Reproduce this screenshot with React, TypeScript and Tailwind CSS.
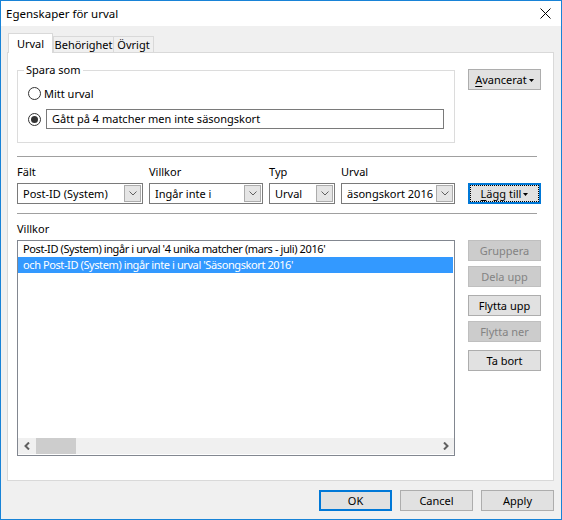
import React from 'react';

function Caret() {
  return (
    <svg width="5" height="3" viewBox="0 0 5 3" className="ml-[2px] mt-[2px]">
      <path d="M0 0h5L2.5 3z" fill="#000" />
    </svg>
  );
}

function Radio({ checked }: { checked?: boolean }) {
  return (
    <span className="w-[13px] h-[13px] rounded-full border border-[#333] bg-white flex items-center justify-center shrink-0">
      {checked && <span className="w-[7px] h-[7px] rounded-full bg-[#333]" />}
    </span>
  );
}

function Btn({ children, disabled }: { children: React.ReactNode; disabled?: boolean }) {
  return (
    <div
      className={
        disabled
          ? 'w-[73px] h-[21px] bg-[#cccccc] border border-[#bfbfbf] text-[#838383] flex items-center justify-center'
          : 'w-[73px] h-[21px] bg-[#e1e1e1] border border-[#adadad] text-black flex items-center justify-center'
      }
    >
      {children}
    </div>
  );
}

function Combo({ w, value }: { w: string; value: string }) {
  return (
    <div className={`${w} h-[21px] border border-[#7a7a7a] bg-white flex items-center pl-[5px] pr-[1px] py-[1px]`}>
      <span className="flex-1 overflow-hidden whitespace-nowrap">{value}</span>
      <span className="w-[17px] h-[17px] bg-[#e5e5e5] border border-[#acacac] flex items-center justify-center shrink-0">
        <svg width="8" height="5" viewBox="0 0 8 5">
          <path d="M0.5 0.5L4 4L7.5 0.5" stroke="#606060" fill="none" strokeWidth="1" />
        </svg>
      </span>
    </div>
  );
}

export default function App() {
  return (
    <div className="w-[562px] h-[520px] border border-[#1883d7] bg-[#f0f0f0] flex flex-col font-['Noto_Sans',sans-serif] text-[11px] leading-[16px] text-black">
      {/* title bar */}
      <div className="h-[25px] bg-white flex items-center justify-between pl-[5px] pr-[10px] shrink-0 text-[11.5px]">
        <span>Egenskaper för urval</span>
        <svg width="11" height="11" viewBox="0 0 11 11">
          <path d="M0.5 0.5L10.5 10.5M10.5 0.5L0.5 10.5" stroke="#000" strokeWidth="1" />
        </svg>
      </div>

      <div className="flex-1 flex flex-col pl-[6px] pr-[7px] pt-[7px]">
        {/* tabs */}
        <div className="flex items-end h-[20px] -mb-[1px] pl-[1px]">
          <div className="relative z-10 w-[45px] h-[20px] bg-white border border-b-0 border-[#d9d9d9] flex items-center justify-center">
            Urval
          </div>
          <div className="w-[61px] h-[17px] border border-b-0 border-[#d9d9d9] flex items-center justify-center">
            Behörighet
          </div>
          <div className="w-[40px] h-[17px] border border-b-0 border-l-0 border-[#d9d9d9] flex items-center justify-center">
            Övrigt
          </div>
        </div>

        {/* tab panel */}
        <div className="h-[429px] bg-white border border-[#d9d9d9] pl-[9px] pt-[17px] flex flex-col">
          <div className="flex items-start">
            <div className="relative w-[438px] h-[73px] border border-[#dcdcdc] pl-[10px] pt-[16px]">
              <span className="absolute -top-[9px] left-[6px] bg-white px-[2px]">Spara som</span>
              <div className="flex items-center h-[13px] gap-[3px]">
                <Radio />
                <span>Mitt urval</span>
              </div>
              <div className="flex items-center h-[20px] mt-[9px] gap-[5px]">
                <Radio checked />
                <div className="w-[398px] h-[20px] border border-[#7a7a7a] flex items-center pl-[5px]">
                  Gått på 4 matcher men inte säsongskort
                </div>
              </div>
            </div>
            <div className="ml-[13px] -mt-[1px]">
              <Btn>
                <span className="underline underline-offset-2">A</span>vancerat
                <Caret />
              </Btn>
            </div>
          </div>

          <div className="mt-[13px] h-[1px] w-[520px] bg-[#a0a0a0]" />

          {/* field row */}
          <div className="mt-[7px] flex items-end">
            <div className="flex flex-col w-[126px]">
              <span>Fält</span>
              <div className="mt-[3px]"><Combo w="w-[126px]" value="Post-ID (System)" /></div>
            </div>
            <div className="flex flex-col w-[114px] ml-[6px]">
              <span>Villkor</span>
              <div className="mt-[3px]"><Combo w="w-[114px]" value="Ingår inte i" /></div>
            </div>
            <div className="flex flex-col w-[66px] ml-[6px]">
              <span>Typ</span>
              <div className="mt-[3px]"><Combo w="w-[66px]" value="Urval" /></div>
            </div>
            <div className="flex flex-col w-[114px] ml-[6px]">
              <span>Urval</span>
              <div className="mt-[3px]"><Combo w="w-[114px]" value="äsongskort 2016" /></div>
            </div>
            <div className="ml-[13px] w-[73px] h-[21px] bg-[#e1e1e1] border-2 border-[#0078d7]">
              <div className="w-full h-full border border-dotted border-black flex items-center justify-center">
                <span className="underline underline-offset-2">L</span>ägg till
                <Caret />
              </div>
            </div>
          </div>

          <div className="mt-[9px] h-[1px] w-[520px] bg-[#a0a0a0]" />

          <span className="mt-[7px]">Villkor</span>

          <div className="mt-[3px] flex items-start">
            <div className="w-[438px] h-[216px] border border-[#828790] bg-white flex flex-col">
              <div className="flex-1 flex flex-col whitespace-nowrap tracking-[-0.4px]">
                <div className="h-[16px] pl-[5px] mr-[1px] flex items-center">
                  Post-ID (System) ingår i urval '4 unika matcher (mars - juli) 2016'
                </div>
                <div className="h-[16px] pl-[5px] mr-[1px] flex items-center bg-[#3399ff] text-white">
                  och Post-ID (System) ingår inte i urval 'Säsongskort 2016'
                </div>
              </div>
              <div className="h-[16px] mb-[1px] bg-[#f0f0f0] flex items-stretch">
                <div className="w-[18px] flex items-center justify-center">
                  <svg width="6" height="8" viewBox="0 0 6 8">
                    <path d="M5 0.5L1.5 4L5 7.5" stroke="#606060" strokeWidth="2" fill="none" />
                  </svg>
                </div>
                <div className="w-[40px] bg-[#cdcdcd]" />
                <div className="flex-1" />
                <div className="w-[17px] flex items-center justify-center">
                  <svg width="6" height="8" viewBox="0 0 6 8">
                    <path d="M1 0.5L4.5 4L1 7.5" stroke="#606060" strokeWidth="2" fill="none" />
                  </svg>
                </div>
              </div>
            </div>
            <div className="ml-[13px] flex flex-col">
              <Btn disabled>Gruppera</Btn>
              <div className="mt-[5px]"><Btn disabled>Dela upp</Btn></div>
              <div className="mt-[8px]"><Btn>Flytta upp</Btn></div>
              <div className="mt-[5px]"><Btn disabled>Flytta ner</Btn></div>
              <div className="mt-[8px]"><Btn>Ta bort</Btn></div>
            </div>
          </div>
        </div>

        {/* dialog buttons */}
        <div className="mt-[9px] flex justify-end gap-[8px]">
          <div className="w-[73px] h-[21px] bg-[#e1e1e1] border-2 border-[#0078d7] flex items-center justify-center">
            OK
          </div>
          <Btn>Cancel</Btn>
          <Btn>Apply</Btn>
        </div>
      </div>
    </div>
  );
}
